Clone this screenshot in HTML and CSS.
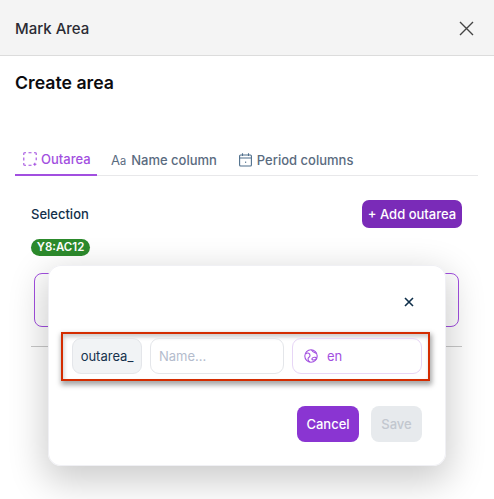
FILE: index.html
```html
<!DOCTYPE html>
<html lang="en">
<head>
<meta charset="utf-8">
<title>Mark Area</title>
<link rel="stylesheet" href="styles.css">
</head>
<body>
<div class="page">
  <header class="topbar">
    <span class="topbar-title">Mark Area</span>
    <svg class="topbar-close" width="16" height="16" viewBox="0 0 16 16"><path d="M2 2 L15 15 M15 2 L2 15" stroke="#444" stroke-width="1.4" fill="none"/></svg>
  </header>
  <main class="content">
    <h1 class="heading">Create area</h1>
    <nav class="tabs">
      <div class="tab tab-active">
        <svg width="14" height="14" viewBox="0 0 14 14" fill="none" stroke="#a24fe0" stroke-width="1.1"><path d="M.8 3V1.5Q.8 .8 1.5 .8H3M5.5 .8H8.5M11 .8H12.5Q13.2 .8 13.2 1.5V3M13.2 5.5V8.2M.8 5.5V8.5M.8 11V12.5Q.8 13.2 1.5 13.2H3M5.5 13.2H8.5M11.8 10.8V13.8M10.3 12.3H13.4"/></svg>
        <span>Outarea</span>
      </div>
      <div class="tab tab-name">
        <span class="tab-glyph"><span class="glyph-big">A</span>a</span>
        <span>Name column</span>
      </div>
      <div class="tab">
        <svg width="13" height="14" viewBox="0 0 13 14" fill="none" stroke="#4f6f8c" stroke-width="1.1"><rect x=".6" y="2" width="11.8" height="11" rx="1"/><path d="M.6 5H12.4M3.5 .3V3M9.5 .3V3"/><rect x="6" y="8.6" width="1.2" height="1.2" fill="#4f6f8c" stroke="none"/></svg>
        <span>Period columns</span>
      </div>
    </nav>
    <section class="panel">
      <div class="panel-head">
        <span class="panel-label">Selection</span>
        <button class="btn-add">+ Add outarea</button>
      </div>
      <div class="badge-row"><span class="badge">Y8:AC12</span></div>
      <div class="area-card"></div>
      <hr class="divider">
    </section>
  </main>

  <div class="modal">
    <div class="modal-top">
      <svg width="10" height="10" viewBox="0 0 10 10"><path d="M1 1 L9 9 M9 1 L1 9" stroke="#0f2f4a" stroke-width="1.6" fill="none"/></svg>
    </div>
    <div class="fields">
      <div class="field field-prefix">outarea_</div>
      <div class="field field-name">Name...</div>
      <div class="field field-lang">
        <svg width="14" height="14" viewBox="0 0 14 14" fill="none" stroke="#a24fe0" stroke-width="1.1"><circle cx="7" cy="7" r="6.2"/><path d="M1.5 5C4 3 6 4.5 6 6.5C6 8.5 4 8 4 10C4 11.5 5 12.5 6 13M12.6 4.5C10.5 3.5 8.5 3 7.5 1M8 9.5C9 8 12 8 12.5 9C12.5 10.5 9.5 11.5 8 10.5Z"/></svg>
        <span>en</span>
      </div>
    </div>
    <div class="modal-actions">
      <button class="btn-cancel">Cancel</button>
      <button class="btn-save">Save</button>
    </div>
  </div>
</div>
</body>
</html>
```
FILE: styles.css
```css
* { box-sizing: border-box; }
html, body { margin: 0; padding: 0; }
body {
  font-family: Inter, "Liberation Sans", sans-serif;
  background: #fff;
  overflow: hidden;
}
.page {
  position: relative;
  width: 494px;
  height: 499px;
  overflow: hidden;
}
.topbar {
  height: 56px;
  background: #f4f4f4;
  border-bottom: 1px solid #dcdcdc;
  display: flex;
  align-items: center;
  justify-content: space-between;
  padding: 1px 20px 0 15px;
}
.topbar-title {
  font-size: 15px;
  font-weight: 500;
  color: #2b2b33;
}
.content { padding: 17px 16px 0 15px; }
.heading {
  margin: 0;
  font-size: 17.7px;
  line-height: 20px;
  font-weight: 600;
  color: #0b0b0f;
}
.tabs {
  margin-top: 52px;
  height: 31px;
  display: flex;
  gap: 14px;
  border-bottom: 1px solid #e8e8ea;
}
.tab {
  display: flex;
  align-items: center;
  gap: 5px;
  height: 31px;
  font-size: 13px;
  font-weight: 500;
  color: #5a6b80;
  padding-bottom: 1px;
}
.tab-active {
  width: 82px;
  padding-left: 8px;
  gap: 4px;
  color: #a24fe0;
  border-bottom: 2px solid #a24fe0;
}
.tab-name { margin-right: 8px; }
.tab-glyph {
  font-size: 11px;
  font-weight: 400;
  color: #5a6b80;
}
.glyph-big { font-size: 13px; }
.panel { padding: 24px 16px 0; }
.panel-head {
  display: flex;
  justify-content: space-between;
  align-items: center;
  height: 28px;
}
.panel-label {
  font-size: 13px;
  font-weight: 500;
  color: #12304a;
}
.btn-add {
  width: 100px;
  height: 28px;
  border: 0;
  border-radius: 7px;
  background: #7a2bb8;
  color: #fff;
  font: 500 13px Inter, "Liberation Sans", sans-serif;
  padding: 0;
}
.badge-row { margin-top: 11px; display: flex; }
.badge {
  height: 17px;
  width: 59px;
  border-radius: 9px;
  background: #2c8a2c;
  color: #fff;
  font-size: 11.5px;
  font-weight: 600;
  line-height: 17px;
  text-align: center;
}
.area-card {
  margin: 17px 3px 0;
  height: 54px;
  border: 1px solid #a24fe0;
  border-radius: 8px;
}
.divider {
  margin: 19px 0 0;
  border: 0;
  border-top: 1px solid #c9c9c9;
}
.modal {
  position: absolute;
  left: 48px;
  top: 265px;
  width: 398px;
  height: 201px;
  background: #fff;
  border-radius: 13px;
  box-shadow: inset 0 0 0 1px #f0f0f4, 0 12px 36px 4px rgba(0,0,0,.2);
  display: flex;
  flex-direction: column;
}
.modal-top {
  height: 67px;
  display: flex;
  justify-content: flex-end;
  align-items: flex-start;
  padding: 32px 32px 0 0;
}
.fields {
  margin-left: 13px;
  width: 369px;
  height: 49px;
  border: 2px solid #d42c00;
  box-shadow: 1px 3px 5px 1px rgba(0,0,0,.35), inset 1px 3px 4px rgba(0,0,0,.2);
  display: flex;
  gap: 8px;
  padding: 4px 0 0 9px;
}
.field {
  height: 36px;
  border-radius: 9px;
  border: 1px solid #e4e6ea;
  font-size: 13px;
  display: flex;
  align-items: center;
}
.field-prefix {
  width: 70px;
  background: #f1f3f5;
  color: #16314d;
  justify-content: center;
}
.field-name {
  width: 134px;
  padding-left: 8px;
  color: #b4bccd;
}
.field-lang {
  width: 130px;
  padding-left: 11px;
  gap: 9px;
  color: #a24fe0;
  border-color: #e7d6f6;
}
.modal-actions {
  margin-top: 25px;
  display: flex;
  justify-content: flex-end;
  gap: 12px;
  padding-right: 24px;
}
.btn-cancel, .btn-save {
  height: 36px;
  border: 0;
  border-radius: 8px;
  padding: 0;
  font: 500 13px Inter, "Liberation Sans", sans-serif;
}
.btn-cancel { width: 62px; background: #8a35d2; color: #fff; }
.btn-save { width: 51px; background: #e7eaed; color: #c2c7cf; }
```
